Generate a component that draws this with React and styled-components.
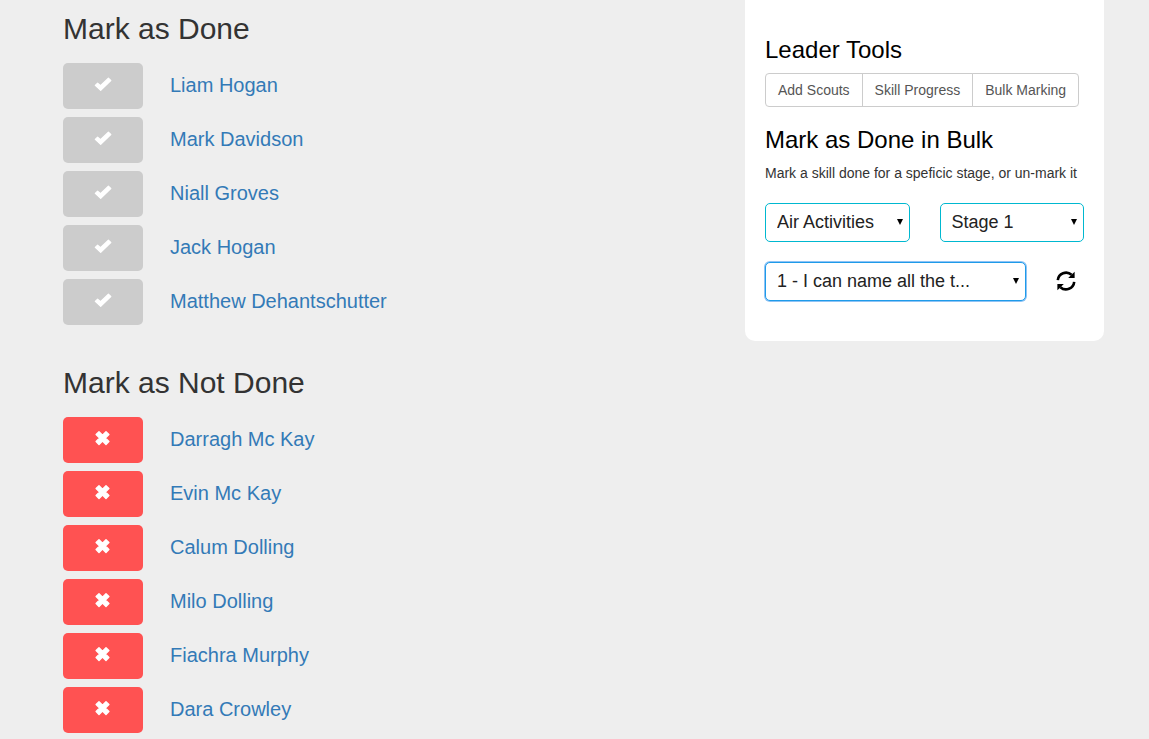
import React from "react";
import styled, { createGlobalStyle } from "styled-components";

const GlobalStyle = createGlobalStyle`
  *, *::before, *::after { box-sizing: border-box; }
  body {
    margin: 0;
    background: #eee;
    color: #333;
    font: 14px/20px "Liberation Sans", Arial, sans-serif;
  }
`;

const Page = styled.div`
  display: grid;
  grid-template-columns: minmax(0, 682fr) minmax(0, 359fr);
  align-items: start;
  padding: 0 45px 6px 63px;
`;

const Section = styled.section`
  padding: 12px 0 29px;
`;

const SectionTitle = styled.h2`
  margin: 0 0 18px;
  font-size: 30px;
  line-height: 33px;
  font-weight: 400;
`;

const ScoutList = styled.ul`
  display: flex;
  flex-direction: column;
  gap: 8px;
  margin: 0;
  padding: 0;
  list-style: none;
`;

const ScoutRow = styled.li`
  display: flex;
  gap: 27px;
`;

const MarkButton = styled.button`
  display: flex;
  justify-content: center;
  align-items: flex-start;
  width: 80px;
  height: 46px;
  padding: 12px 0 0;
  border: 0;
  border-radius: 5px;
  background: ${(p) => (p.$done ? "#ff5252" : "#ccc")};
  color: #fff;
  cursor: pointer;
`;

const ScoutLink = styled.a`
  color: #337ab7;
  font-size: 20px;
  line-height: 44px;
  text-decoration: none;
`;

const Card = styled.aside`
  padding: 37px 20px 40px;
  border-radius: 0 0 10px 10px;
  background: #fff;
`;

const CardTitle = styled.h3`
  margin: 0 0 10px;
  color: #000;
  font-size: 24px;
  line-height: 26px;
  font-weight: 400;
`;

const ButtonGroup = styled.div`
  display: flex;
  margin-bottom: 20px;
`;

const ToolButton = styled.button`
  height: 34px;
  padding: 0 12px;
  border: 1px solid #ccc;
  background: #fff;
  color: #555;
  font: inherit;
  white-space: nowrap;
  cursor: pointer;
  &:first-child { border-radius: 4px 0 0 4px; }
  &:last-child { border-radius: 0 4px 4px 0; }
  & + & { margin-left: -1px; }
`;

const Hint = styled.p`
  margin: 0 0 20px;
  white-space: nowrap;
`;

const Fields = styled.div`
  display: flex;
  gap: 30px;
  & + & { margin-top: 20px; }
`;

const SelectBox = styled.div`
  position: relative;
  flex: 1;
  min-width: 0;
`;

const Select = styled.select`
  display: block;
  appearance: none;
  width: 100%;
  height: 39px;
  padding: 0 24px 2px 11px;
  border: 1px solid ${(p) => (p.$active ? "#1e9be9" : "#00b8d0")};
  border-radius: 5px;
  outline: 0;
  box-shadow: ${(p) => (p.$active ? "0 0 0 1px #8fc3f5" : "none")};
  background: #fff;
  color: #222;
  font: 18px "Liberation Sans", Arial, sans-serif;
`;

const Arrow = styled.svg`
  position: absolute;
  top: 16px;
  right: 7px;
  pointer-events: none;
`;

const RefreshButton = styled.button`
  display: flex;
  align-items: center;
  padding: 0 0 2px;
  margin-right: 8px;
  border: 0;
  background: none;
  color: #000;
  cursor: pointer;
`;

const CheckIcon = () => (
  <svg width="18" height="18" viewBox="0 0 18 18" aria-hidden="true">
    <path
      d="M1.3 10.4 L3.6 8.1 L6.5 10.7 L14.4 3.2 L16.8 5.5 L6.7 15.4 Z"
      fill="currentColor"
      stroke="currentColor"
      strokeWidth="1.2"
      strokeLinejoin="round"
    />
  </svg>
);

const CrossIcon = () => (
  <svg width="18" height="18" viewBox="0 0 18 18" aria-hidden="true">
    <path
      d="M5 2.7 L8.5 6.2 L12 2.7 L14.9 5.6 L11.4 9.1 L14.9 12.6 L12 15.5 L8.5 12 L5 15.5 L2.1 12.6 L5.6 9.1 L2.1 5.6 Z"
      fill="currentColor"
      stroke="currentColor"
      strokeWidth="1.4"
      strokeLinejoin="round"
    />
  </svg>
);

const RefreshIcon = () => (
  <svg width="20" height="20" viewBox="0 0 20 20" aria-hidden="true">
    <g id="half">
      <path d="M1.8 9.2 A8.3 8.3 0 0 1 15.6 3.8" fill="none" stroke="currentColor" strokeWidth="2.6" />
      <path d="M18.6 0.8 V6.9 H12.2 Z" fill="currentColor" />
    </g>
    <use href="#half" transform="rotate(180 10 10)" />
  </svg>
);

const SelectField = ({ label, options, active }) => (
  <SelectBox>
    <Select aria-label={label} $active={active}>
      {options.map((o) => (
        <option key={o}>{o}</option>
      ))}
    </Select>
    <Arrow width="6" height="6" viewBox="0 0 6 6" aria-hidden="true">
      <path d="M0 0 H6 L3 6 Z" fill="#000" />
    </Arrow>
  </SelectBox>
);

const Scouts = ({ title, names, done }) => (
  <Section>
    <SectionTitle>{title}</SectionTitle>
    <ScoutList>
      {names.map((name) => (
        <ScoutRow key={name}>
          <MarkButton type="button" $done={done} aria-label={`${title}: ${name}`}>
            {done ? <CrossIcon /> : <CheckIcon />}
          </MarkButton>
          <ScoutLink href="#">{name}</ScoutLink>
        </ScoutRow>
      ))}
    </ScoutList>
  </Section>
);

const pending = ["Liam Hogan", "Mark Davidson", "Niall Groves", "Jack Hogan", "Matthew Dehantschutter"];
const completed = ["Darragh Mc Kay", "Evin Mc Kay", "Calum Dolling", "Milo Dolling", "Fiachra Murphy", "Dara Crowley"];

export default function App() {
  return (
    <>
      <GlobalStyle />
      <Page>
        <main>
          <Scouts title="Mark as Done" names={pending} />
          <Scouts title="Mark as Not Done" names={completed} done />
        </main>
        <Card>
          <CardTitle>Leader Tools</CardTitle>
          <ButtonGroup>
            <ToolButton type="button">Add Scouts</ToolButton>
            <ToolButton type="button">Skill Progress</ToolButton>
            <ToolButton type="button">Bulk Marking</ToolButton>
          </ButtonGroup>
          <CardTitle>Mark as Done in Bulk</CardTitle>
          <Hint>Mark a skill done for a speficic stage, or un-mark it</Hint>
          <Fields>
            <SelectField label="Skill" options={["Air Activities"]} />
            <SelectField label="Stage" options={["Stage 1"]} />
          </Fields>
          <Fields>
            <SelectField label="Requirement" options={["1 - I can name all the t..."]} active />
            <RefreshButton type="button" aria-label="Refresh">
              <RefreshIcon />
            </RefreshButton>
          </Fields>
        </Card>
      </Page>
    </>
  );
}
